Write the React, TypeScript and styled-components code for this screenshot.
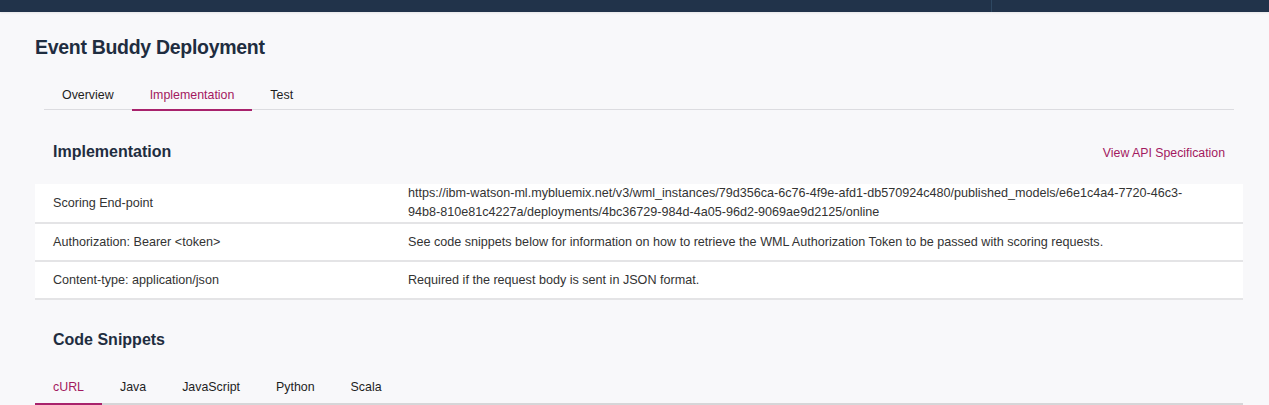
import React from 'react';
import styled, { createGlobalStyle } from 'styled-components';

const GlobalStyle = createGlobalStyle`
  body {
    margin: 0;
    background: #f8f8fa;
    font-family: "Liberation Sans", Arial, sans-serif;
    color: #2d2d2d;
  }
`;

const TopBar = styled.div`
  height: 12px;
  background: #21334a;
  display: flex;
  box-shadow: 0 1px 2px rgba(0, 0, 0, 0.08);
`;

const TopBarLeft = styled.div`
  width: 991px;
  border-right: 1px solid #2e4862;
`;

const Page = styled.main`
  padding: 23px 26px 0 35px;
`;

const Title = styled.h1`
  margin: 0;
  font-size: 19.5px;
  line-height: 24px;
  font-weight: 700;
  color: #1f2d40;
  letter-spacing: -0.3px;
`;

const TabBar = styled.div<{ inset?: number }>`
  display: flex;
  margin: ${(p) => (p.inset ? `0 ${p.inset}px` : '0')};
  border-bottom: ${(p) => (p.inset ? '1px solid #dcdce0' : '2px solid #d6d6d8')};
`;

const Tab = styled.div<{ active?: boolean }>`
  padding: 0 18px;
  font-size: 12.4px;
  color: ${(p) => (p.active ? '#a3195f' : '#1e1e1e')};
  border-bottom: 2px solid ${(p) => (p.active ? '#a8226c' : 'transparent')};
  margin-bottom: -2px;
  display: flex;
  align-items: center;
`;

const TopTabs = styled(TabBar)`
  margin-top: 22px;
  height: 28px;
`;

const SnippetTabs = styled(TabBar)`
  height: 33px;
`;

const Section = styled.section`
  width: 1208px;
`;

const SectionHead = styled.div<{ h: number }>`
  display: flex;
  align-items: center;
  justify-content: space-between;
  padding: 10px 18px 0;
  height: ${(p) => p.h}px;
`;

const SectionTitle = styled.h2`
  margin: 0;
  font-size: 16px;
  font-weight: 700;
  color: #1f2d40;
`;

const SpecLink = styled.a`
  font-size: 12.3px;
  color: #a3195f;
  text-decoration: none;
  cursor: pointer;
  margin-top: 2px;
`;

const Table = styled.div`
  background: #fff;
`;

const Row = styled.div`
  display: grid;
  grid-template-columns: 373px 1fr;
  align-items: center;
  min-height: 36px;
  border-bottom: 2px solid #e4e4e6;
  font-size: 12.6px;
  line-height: 19px;
  color: #333;
`;

const Label = styled.div`
  padding-left: 18px;
`;

const Value = styled.div`
  padding-right: 48px;
`;

const rows = [
  {
    label: 'Scoring End-point',
    value:
      'https://ibm-watson-ml.mybluemix.net/v3/wml_instances/79d356ca-6c76-4f9e-afd1-db570924c480/published_models/e6e1c4a4-7720-46c3-94b8-810e81c4227a/deployments/4bc36729-984d-4a05-96d2-9069ae9d2125/online',
  },
  {
    label: 'Authorization: Bearer <token>',
    value:
      'See code snippets below for information on how to retrieve the WML Authorization Token to be passed with scoring requests.',
  },
  {
    label: 'Content-type: application/json',
    value: 'Required if the request body is sent in JSON format.',
  },
];

const languages = ['cURL', 'Java', 'JavaScript', 'Python', 'Scala'];

export default function App() {
  return (
    <>
      <GlobalStyle />
      <TopBar>
        <TopBarLeft />
      </TopBar>
      <Page>
        <Title>Event Buddy Deployment</Title>
        <TopTabs inset={9}>
          <Tab>Overview</Tab>
          <Tab active>Implementation</Tab>
          <Tab>Test</Tab>
        </TopTabs>
        <Section>
          <SectionHead h={64}>
            <SectionTitle>Implementation</SectionTitle>
            <SpecLink>View API Specification</SpecLink>
          </SectionHead>
          <Table>
            {rows.map((r) => (
              <Row key={r.label}>
                <Label>{r.label}</Label>
                <Value>{r.value}</Value>
              </Row>
            ))}
          </Table>
          <SectionHead h={60}>
            <SectionTitle>Code Snippets</SectionTitle>
          </SectionHead>
          <SnippetTabs>
            {languages.map((l, i) => (
              <Tab key={l} active={i === 0}>
                {l}
              </Tab>
            ))}
          </SnippetTabs>
        </Section>
      </Page>
    </>
  );
}
